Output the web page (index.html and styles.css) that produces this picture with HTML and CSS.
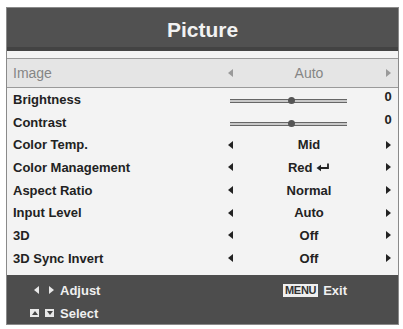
FILE: index.html
```html
<!DOCTYPE html>
<html lang="en">
<head>
    <meta charset="UTF-8">
    <title>Picture</title>
    <link rel="stylesheet" href="styles.css">
</head>
<body>
    <div class="menu">
        <div class="menu-title">Picture</div>

        <div class="menu-body">
            <div class="row row-selected">
                <span class="label">Image</span>
                <span class="arrow left"></span>
                <span class="value">Auto</span>
                <span class="arrow right"></span>
            </div>
            <div class="row">
                <span class="label">Brightness</span>
                <span class="slider"><span class="knob"></span></span>
                <span class="num">0</span>
            </div>
            <div class="row">
                <span class="label">Contrast</span>
                <span class="slider"><span class="knob"></span></span>
                <span class="num">0</span>
            </div>
            <div class="row">
                <span class="label">Color Temp.</span>
                <span class="arrow left"></span>
                <span class="value">Mid</span>
                <span class="arrow right"></span>
            </div>
            <div class="row">
                <span class="label">Color Management</span>
                <span class="arrow left"></span>
                <span class="value">Red
                    <svg class="enter" width="14" height="9" viewBox="0 0 14 9">
                        <path d="M12 0.5 V5 H4" fill="none" stroke="#222" stroke-width="1.8"/>
                        <path d="M0.5 5 L5 1.8 V8.2 Z" fill="#222"/>
                    </svg>
                </span>
                <span class="arrow right"></span>
            </div>
            <div class="row">
                <span class="label">Aspect Ratio</span>
                <span class="arrow left"></span>
                <span class="value">Normal</span>
                <span class="arrow right"></span>
            </div>
            <div class="row">
                <span class="label">Input Level</span>
                <span class="arrow left"></span>
                <span class="value">Auto</span>
                <span class="arrow right"></span>
            </div>
            <div class="row">
                <span class="label">3D</span>
                <span class="arrow left"></span>
                <span class="value">Off</span>
                <span class="arrow right"></span>
            </div>
            <div class="row">
                <span class="label">3D Sync Invert</span>
                <span class="arrow left"></span>
                <span class="value">Off</span>
                <span class="arrow right"></span>
            </div>
        </div>

        <div class="menu-footer">
            <div class="hint">
                <span class="keys">
                    <span class="tri tri-left"></span>
                    <span class="tri tri-right"></span>
                </span>
                Adjust
            </div>
            <div class="hint hint-exit">
                <span class="menu-key">MENU</span>
                Exit
            </div>
            <div class="hint">
                <span class="keys">
                    <span class="box"><span class="tri tri-up"></span></span>
                    <span class="box"><span class="tri tri-down"></span></span>
                </span>
                Select
            </div>
        </div>
    </div>
</body>
</html>
```

FILE: styles.css
```css
body {
    margin: 0;
    background: #ffffff;
    font-family: "Liberation Sans", Arial, sans-serif;
}

.menu {
    margin: 7px 4px 0 6px;
    width: 391px;
    border: 1px solid #8a8a8a;
    background: #f3f3f3;
}

.menu-title {
    height: 39px;
    line-height: 43px;
    background: #515151;
    border-bottom: 4px solid #434343;
    color: #f2f2f2;
    font-size: 21px;
    font-weight: bold;
    text-align: center;
}

.menu-body {
    padding: 7px 0 5px 0;
}

.row {
    display: grid;
    grid-template-columns: 1fr 10px 148px 10px;
    align-items: center;
    height: 22.7px;
    padding: 0 5px 0 6px;
    font-size: 13px;
    font-weight: bold;
    color: #222;
}

.row-selected {
    height: 28px;
    background: #e5e5e5;
    border-top: 1px solid #9a9a9a;
    border-bottom: 1px solid #9a9a9a;
    color: #858585;
    font-size: 14px;
    font-weight: normal;
}

.value {
    text-align: center;
}

.enter {
    vertical-align: 0;
}

.arrow {
    justify-self: center;
    width: 0;
    height: 0;
    border-top: 4.5px solid transparent;
    border-bottom: 4.5px solid transparent;
}

.arrow.left {
    border-right: 5px solid #222;
}

.arrow.right {
    border-left: 5px solid #222;
}

.row-selected .arrow.left {
    border-right-color: #9a9a9a;
}

.row-selected .arrow.right {
    border-left-color: #9a9a9a;
}

.slider {
    grid-column: 2 / 4;
    position: relative;
    height: 2px;
    margin: 3px 36px 0 5px;
    border-top: 1px solid #666;
    border-bottom: 1px solid #666;
    background: #c8c8c8;
}

.knob {
    position: absolute;
    left: 58px;
    top: -3px;
    width: 7px;
    height: 7px;
    border-radius: 50%;
    background: #555;
}

.num {
    justify-self: center;
    margin-top: -5px;
}

.menu-footer {
    display: grid;
    grid-template-columns: 1fr 115px;
    height: 45px;
    padding-top: 4px;
    background: #4d4d4d;
    color: #f0f0f0;
    font-size: 13px;
    font-weight: bold;
}

.hint {
    display: flex;
    align-items: center;
    height: 23px;
    padding-left: 23px;
}

.hint-exit {
    padding-left: 0;
}

.keys {
    display: flex;
    align-items: center;
    gap: 10px;
    width: 30px;
}

.tri {
    width: 0;
    height: 0;
}

.tri-left {
    margin-left: 4px;
    border-top: 4px solid transparent;
    border-bottom: 4px solid transparent;
    border-right: 5px solid #e8e8e8;
}

.tri-right {
    border-top: 4px solid transparent;
    border-bottom: 4px solid transparent;
    border-left: 5px solid #e8e8e8;
}

.box {
    display: flex;
    align-items: center;
    justify-content: center;
    width: 9px;
    height: 8px;
    background: #e8e8e8;
}

.keys .box + .box {
    margin-left: -4px;
}

.tri-up {
    border-left: 3px solid transparent;
    border-right: 3px solid transparent;
    border-bottom: 4px solid #444;
}

.tri-down {
    border-left: 3px solid transparent;
    border-right: 3px solid transparent;
    border-top: 4px solid #444;
}

.menu-key {
    display: inline-block;
    margin-right: 5px;
    padding: 0 2px;
    height: 13px;
    line-height: 13px;
    background: #f0f0f0;
    color: #333;
    font-size: 11px;
    letter-spacing: -0.3px;
}
```
